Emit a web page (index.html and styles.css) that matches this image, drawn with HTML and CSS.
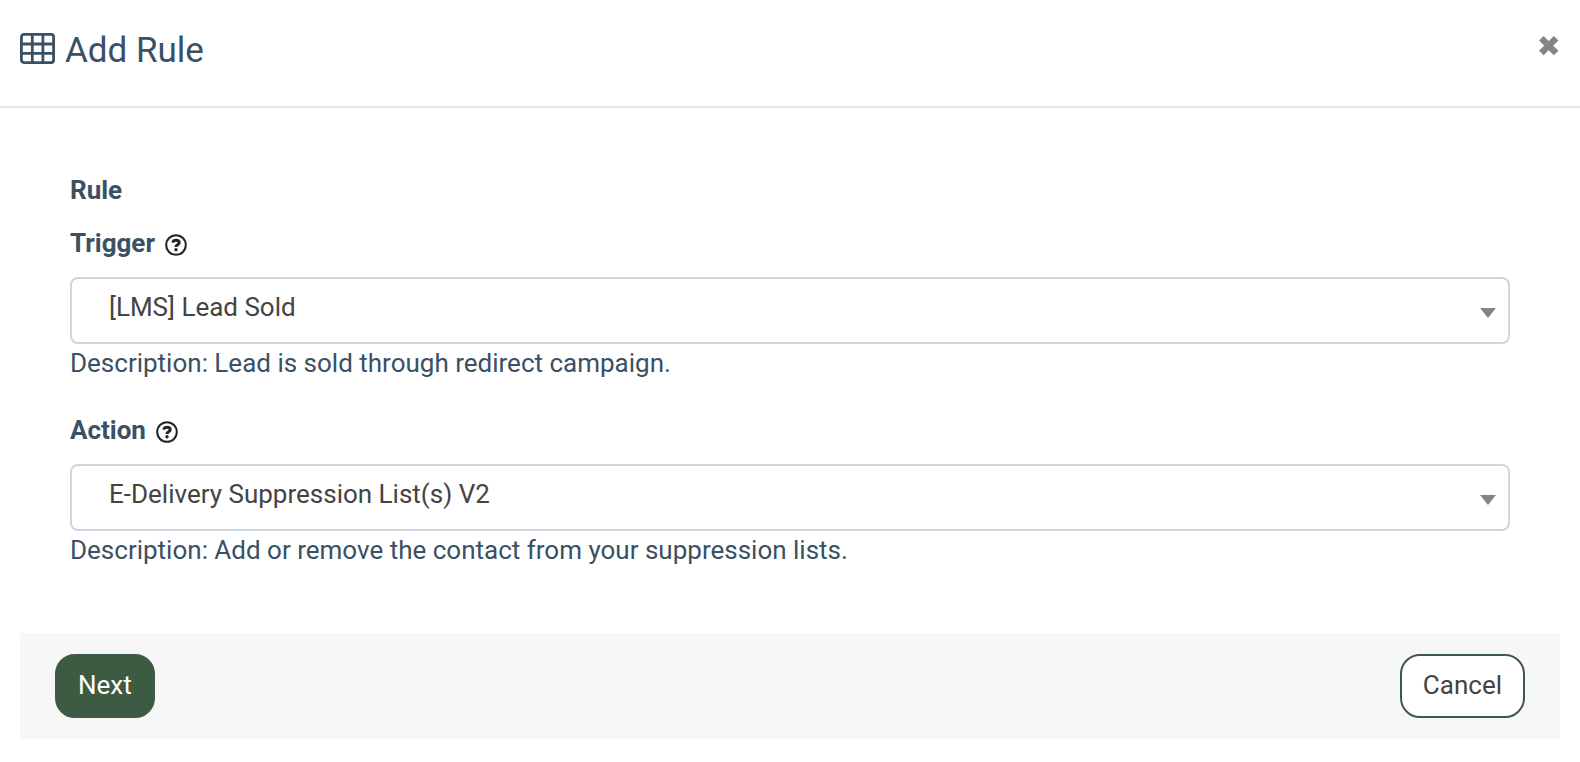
FILE: index.html
```html
<!DOCTYPE html>
<html lang="en">
<head>
    <meta charset="UTF-8">
    <meta name="viewport" content="width=device-width, initial-scale=1.0">
    <title>Add Rule</title>
    <link rel="stylesheet" href="styles.css">
</head>
<body>
    <form class="modal">
        <header class="modal-header">
            <h1 class="modal-title">
                <svg class="table-icon" viewBox="0 0 35 31" aria-hidden="true">
                    <rect x="1.4" y="1.4" width="32.2" height="28.2" rx="2.5"/>
                    <path d="M1 11h33M1 20.4h33M12.3 1v29M22.9 1v29"/>
                </svg>
                Add Rule
            </h1>
            <button type="button" class="close" aria-label="Close">
                <svg viewBox="0 0 22 22" aria-hidden="true">
                    <path d="M3.3 3.3l14.8 14.8M18.1 3.3L3.3 18.1"/>
                </svg>
            </button>
        </header>

        <div class="modal-body">
            <h2 class="section-title">Rule</h2>

            <div class="field">
                <div class="field-label">
                    <label for="trigger">Trigger</label>
                    <svg class="help-icon" viewBox="0 0 22 22" aria-hidden="true">
                        <circle cx="11" cy="11" r="9.8"/>
                        <path d="M7.9 8.6c.2-1.5 1.4-2.3 3.1-2.3 1.8 0 3.2.9 3.2 2.4 0 2.1-3.2 2-3.2 4.2"/>
                        <circle class="dot" cx="11" cy="15.8" r="1.7"/>
                    </svg>
                </div>
                <div class="select-wrap">
                    <select id="trigger">
                        <option>[LMS] Lead Sold</option>
                    </select>
                </div>
                <p class="description">Description: Lead is sold through redirect campaign.</p>
            </div>

            <div class="field">
                <div class="field-label">
                    <label for="action">Action</label>
                    <svg class="help-icon" viewBox="0 0 22 22" aria-hidden="true">
                        <circle cx="11" cy="11" r="9.8"/>
                        <path d="M7.9 8.6c.2-1.5 1.4-2.3 3.1-2.3 1.8 0 3.2.9 3.2 2.4 0 2.1-3.2 2-3.2 4.2"/>
                        <circle class="dot" cx="11" cy="15.8" r="1.7"/>
                    </svg>
                </div>
                <div class="select-wrap">
                    <select id="action">
                        <option>E-Delivery Suppression List(s) V2</option>
                    </select>
                </div>
                <p class="description">Description: Add or remove the contact from your suppression lists.</p>
            </div>
        </div>

        <footer class="modal-footer">
            <button type="submit" class="btn btn-primary">Next</button>
            <button type="button" class="btn btn-outline">Cancel</button>
        </footer>
    </form>
</body>
</html>
```

FILE: styles.css
```css
:root {
    --text: #3a5064;
    --control-text: #444444;
    --muted: #848484;
    --green: #3d5a43;
    --border: #d1d5de;
}

* {
    box-sizing: border-box;
}

body {
    margin: 0;
    font-family: Roboto, "Liberation Sans", sans-serif;
    font-size: 26px;
    line-height: 38px;
    background: #ffffff;
    color: var(--text);
}

h1, h2, p {
    margin: 0;
}

.modal-header {
    display: flex;
    justify-content: space-between;
    align-items: flex-start;
    padding: 25px 20px 29px;
    border-bottom: 2px solid #e4e8ed;
}

.modal-title {
    display: flex;
    align-items: center;
    gap: 10px;
    font-size: 35px;
    font-weight: 400;
    line-height: 52px;
}

.table-icon {
    width: 35px;
    height: 31px;
    margin-bottom: 5px;
    fill: none;
    stroke: currentColor;
    stroke-width: 2.8;
}

.close {
    display: flex;
    align-items: center;
    height: 42px;
    padding: 0;
    border: none;
    background: none;
    color: var(--muted);
    cursor: pointer;
}

.close svg {
    width: 22px;
    height: 22px;
    fill: none;
    stroke: currentColor;
    stroke-width: 6.4;
}

.modal-body {
    padding: 63px 70px 64px;
}

.section-title {
    margin-bottom: 15px;
    font-size: 26px;
    font-weight: 700;
}

.field + .field {
    margin-top: 29px;
}

.field-label {
    display: flex;
    align-items: center;
    gap: 10px;
    margin-bottom: 15px;
    font-weight: 700;
}

.help-icon {
    width: 22px;
    height: 22px;
    margin-top: 3px;
    fill: none;
    stroke: #212529;
    stroke-width: 2;
}

.help-icon path {
    stroke-width: 3;
}

.help-icon .dot {
    fill: #212529;
    stroke: none;
}

.select-wrap {
    position: relative;
}

.select-wrap::after {
    content: "";
    position: absolute;
    top: 31px;
    right: 14px;
    border: 8px solid transparent;
    border-top: 10px solid var(--muted);
    border-bottom: none;
    pointer-events: none;
}

select {
    display: block;
    width: 100%;
    height: 67px;
    padding: 0 37px 8px;
    border: 2px solid var(--border);
    border-radius: 8px;
    background: #ffffff;
    color: var(--control-text);
    font: inherit;
    appearance: none;
}

.modal-footer {
    display: flex;
    justify-content: space-between;
    margin: 0 20px 20px;
    padding: 21px 35px;
    background: #f7f7f7;
}

.btn {
    height: 64px;
    padding: 0 21px 2px;
    border: 2px solid var(--green);
    border-radius: 20px;
    font: inherit;
    cursor: pointer;
}

.btn-primary {
    background: var(--green);
    color: #ffffff;
}

.btn-outline {
    background: #ffffff;
    color: var(--control-text);
}
```
